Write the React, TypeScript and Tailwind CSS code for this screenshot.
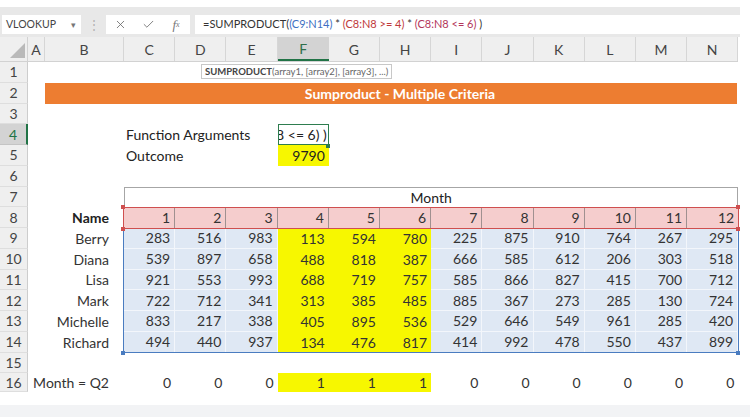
import type { ReactNode } from "react";
import { Check, X } from "lucide-react";
import clsx from "clsx";

const letters = ["C", "D", "E", "F", "G", "H", "I", "J", "K", "L", "M", "N"];

const people: [string, number[]][] = [
  ["Berry", [283, 516, 983, 113, 594, 780, 225, 875, 910, 764, 267, 295]],
  ["Diana", [539, 897, 658, 488, 818, 387, 666, 585, 612, 206, 303, 518]],
  ["Lisa", [921, 553, 993, 688, 719, 757, 585, 866, 827, 415, 700, 712]],
  ["Mark", [722, 712, 341, 313, 385, 485, 885, 367, 273, 285, 130, 724]],
  ["Michelle", [833, 217, 338, 405, 895, 536, 529, 646, 549, 961, 285, 420]],
  ["Richard", [494, 440, 937, 134, 476, 817, 414, 992, 478, 550, 437, 899]],
];

// months 4..6 are the Q2 columns (F:H)
const q2 = (i: number) => i >= 3 && i <= 5;

const RowHead = ({ n, active }: { n: number; active?: boolean }) => (
  <div
    className={clsx(
      "flex w-[28px] shrink-0 items-center justify-center border-b text-[14px]",
      active
        ? "border-r-2 border-b-[#c4c4c4] border-r-[#217346] bg-[#d3d3d3] text-[#217346]"
        : "border-r border-b-[#dedede] border-r-[#cdcdcd] bg-[#efefef] text-[#444]"
    )}
  >
    {n}
  </div>
);

const Row = ({
  n,
  active,
  last,
  children,
}: {
  n: number;
  active?: boolean;
  last?: boolean;
  children?: ReactNode;
}) => (
  <div className={clsx("flex", last ? "h-[18.75px]" : "h-[20.75px]")}>
    <RowHead n={n} active={active} />
    {children}
  </div>
);

const NameCell = ({ children, bold }: { children?: ReactNode; bold?: boolean }) => (
  <div
    className={clsx(
      "flex w-[96px] shrink-0 items-center justify-end whitespace-nowrap pr-[15px] text-[14px]",
      bold && "font-bold text-[#222]"
    )}
  >
    {children}
  </div>
);

const Handle = ({ className }: { className: string }) => (
  <div className={clsx("absolute h-[4px] w-[4px]", className)} />
);

export default function App() {
  return (
    <div className="relative flex h-[417px] w-[750px] flex-col overflow-hidden bg-white font-['Lato',sans-serif] text-[#333]">
      <div className="h-[7px] shrink-0" />

      {/* name box + formula bar */}
      <div className="flex h-[30px] w-[740px] shrink-0 items-start bg-[#e8e8e8] pt-[8px]">
        <div className="ml-[2px] flex h-[19px] w-[79px] items-center justify-between bg-white pl-[4px] pr-[5px] text-[10.5px] text-[#444]">
          <span>VLOOKUP</span>
          <span className="text-[9px] text-[#777]">▾</span>
        </div>
        <div className="flex h-[19px] w-[25px] items-center justify-center text-[12px] text-[#b0b0b0]">
          ⋮
        </div>
        <div className="flex h-[19px] w-[84px] bg-white text-[#666]">
          <div className="flex w-[28px] items-center justify-center">
            <X size={13} strokeWidth={1.5} />
          </div>
          <div className="flex w-[28px] items-center justify-center">
            <Check size={13} strokeWidth={1.5} />
          </div>
          <div className="flex w-[28px] items-center justify-center font-['Liberation_Serif',serif] text-[13px] italic text-[#777]">
            f<span className="text-[8px]">x</span>
          </div>
        </div>
        <div className="ml-[5px] flex h-[19px] flex-1 items-center whitespace-nowrap bg-white pl-[8px] text-[11px] text-[#333]">
          <span>=SUMPRODUCT(</span>
          <span className="text-[#3e6fc2]">(C9:N14)</span>
          <span>&nbsp;*&nbsp;</span>
          <span className="text-[#c0393b]">(C8:N8 &gt;= 4)</span>
          <span>&nbsp;*&nbsp;</span>
          <span className="text-[#b3365a]">(C8:N8 &lt;= 6)</span>
          <span>&nbsp;)</span>
        </div>
      </div>

      {/* column headers */}
      <div className="flex h-[25px] w-[738.4px] shrink-0 border-b border-[#d2d2d2] bg-[#efefef] text-[14px] text-[#444]">
        <div className="w-[28px] shrink-0 border-r border-[#d2d2d2]">
          <svg width="27" height="24" viewBox="0 0 27 24">
            <polygon points="25,6 25,21 10,21" fill="#b9b9b9" />
          </svg>
        </div>
        <div className="flex w-[17px] shrink-0 items-center justify-center border-r border-[#d6d6d6]">A</div>
        <div className="flex w-[79px] shrink-0 items-center justify-center border-r border-[#d6d6d6]">B</div>
        {letters.map((l) => (
          <div
            key={l}
            className={clsx(
              "flex w-[51.2px] shrink-0 items-center justify-center",
              l === "F"
                ? "border-b-2 border-[#217346] bg-[#d3d3d3] text-[#2f6f4a]"
                : "border-r border-[#d6d6d6]"
            )}
          >
            {l}
          </div>
        ))}
      </div>

      {/* sheet */}
      <div className="relative shrink-0">
        <Row n={1} />
        <Row n={2}>
          <div className="w-[17px] shrink-0" />
          <div className="flex w-[692px] shrink-0 items-center justify-center bg-[#ed7d31] pl-[18px] text-[14px] font-bold text-white">
            Sumproduct - Multiple Criteria
          </div>
        </Row>
        <Row n={3} />
        <Row n={4} active>
          <div className="w-[96px] shrink-0" />
          <div className="flex w-[153.6px] shrink-0 items-center whitespace-nowrap pl-[2px] text-[14px] text-[#222]">
            Function Arguments
          </div>
          <div className="relative flex w-[51.2px] shrink-0 items-center justify-end overflow-hidden whitespace-nowrap border border-[#2e7d4f] pr-[1px] text-[14px] text-[#222]">
            N8 &lt;= 6) )
          </div>
        </Row>
        <Row n={5}>
          <div className="w-[96px] shrink-0" />
          <div className="flex w-[153.6px] shrink-0 items-center pl-[2px] text-[14px] text-[#222]">Outcome</div>
          <div className="flex w-[51.2px] shrink-0 items-center justify-end bg-[#f7f700] pr-[4px] text-[14px] text-[#222]">
            9790
          </div>
        </Row>
        <Row n={6} />
        <Row n={7}>
          <div className="w-[96px] shrink-0" />
          <div className="flex w-[614.4px] shrink-0 items-center justify-center border-x border-t border-[#a6a6a6] text-[14px] text-[#222]">
            Month
          </div>
        </Row>
        <Row n={8}>
          <NameCell bold>Name</NameCell>
          {letters.map((l, i) => (
            <div
              key={l}
              className={clsx(
                "flex w-[51.2px] shrink-0 items-center justify-end bg-[#f5cdcd] pr-[4px] text-[14px]",
                i < 11 && "border-r border-[#a09090]"
              )}
            >
              {i + 1}
            </div>
          ))}
        </Row>
        {people.map(([name, vals], r) => (
          <Row key={name} n={9 + r}>
            <NameCell>{name}</NameCell>
            {vals.map((v, i) => (
              <div
                key={i}
                className={clsx(
                  "flex w-[51.2px] shrink-0 items-center justify-end pr-[4px] text-[14px]",
                  q2(i) ? "bg-[#f7f700]" : "border-b border-r border-[#f3f6fb] bg-[#dfe8f4]"
                )}
              >
                {v}
              </div>
            ))}
          </Row>
        ))}
        <Row n={15} />
        <Row n={16} last>
          <NameCell>Month = Q2</NameCell>
          {letters.map((l, i) => (
            <div
              key={l}
              className={clsx(
                "flex w-[51.2px] shrink-0 items-center justify-end pr-[4px] text-[14px]",
                q2(i) && "bg-[#f7f700]"
              )}
            >
              {q2(i) ? 1 : 0}
            </div>
          ))}
        </Row>

        {/* formula reference highlights */}
        <div className="pointer-events-none absolute left-[123px] top-[166px] h-[125px] w-[616px] border border-[#4a7cc0]" />
        <div className="pointer-events-none absolute left-[123px] top-[145px] h-[22px] w-[616px] border border-[#cf4f4f]" />
        <Handle className="left-[121px] top-[143px] bg-[#cf4f4f]" />
        <Handle className="left-[736px] top-[143px] bg-[#cf4f4f]" />
        <Handle className="left-[121px] top-[165px] bg-[#cf4f4f]" />
        <Handle className="left-[736px] top-[165px] bg-[#cf4f4f]" />
        <Handle className="left-[121px] top-[289px] bg-[#4a7cc0]" />
        <Handle className="left-[736px] top-[289px] bg-[#4a7cc0]" />
        <div className="absolute left-[326px] top-[82px] h-[4px] w-[4px] bg-[#2e7d4f]" />
      </div>

      <div className="flex-1" />
      <div className="h-[12px] shrink-0 bg-[#f2f3f5]" />

      {/* function tooltip */}
      <div className="absolute left-[201px] top-[64px] flex h-[15px] items-center whitespace-nowrap border border-[#c8c8c8] bg-white px-[3px] text-[9.5px] leading-none text-[#666]">
        <span className="font-bold text-[#444]">SUMPRODUCT</span>(array1, [array2], [array3], ...)
      </div>
    </div>
  );
}
